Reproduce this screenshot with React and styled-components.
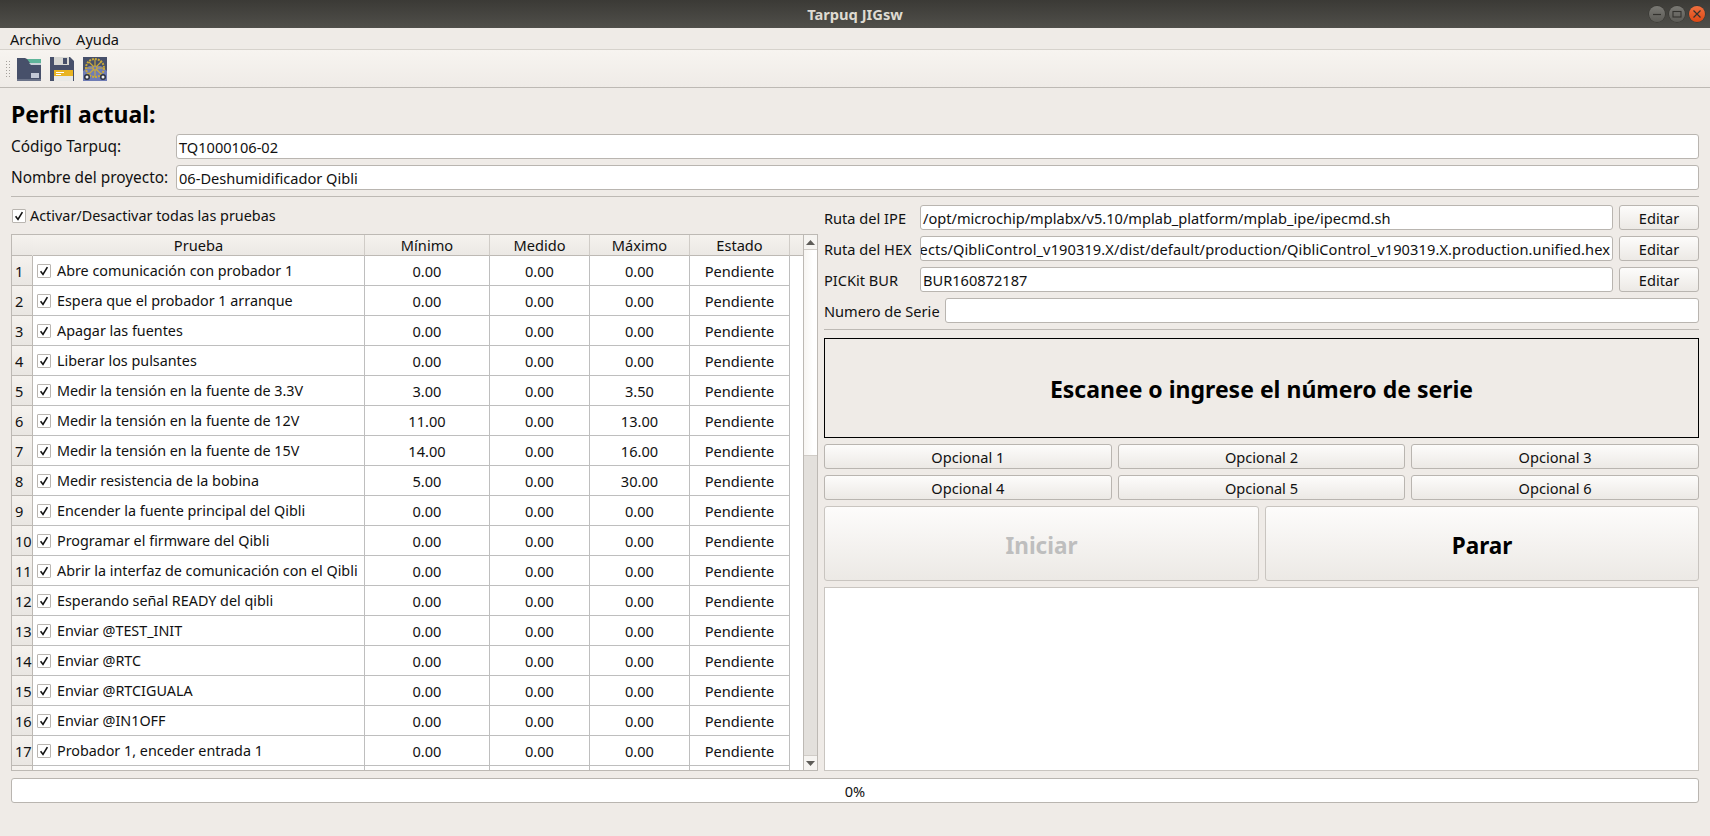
import styled, { createGlobalStyle } from 'styled-components';

const FONT = '"Noto Sans", "Open Sans", sans-serif';

const GlobalStyle = createGlobalStyle`
  html, body {
    margin: 0;
    padding: 0;
    background: #efebe7;
  }
  body {
    font-family: ${FONT};
    font-size: 14.6px;
    color: #111;
  }
`;

const tests = [
  ['Abre comunicación con probador 1', '0.00', '0.00'],
  ['Espera que el probador 1 arranque', '0.00', '0.00'],
  ['Apagar las fuentes', '0.00', '0.00'],
  ['Liberar los pulsantes', '0.00', '0.00'],
  ['Medir la tensión en la fuente de 3.3V', '3.00', '3.50'],
  ['Medir la tensión en la fuente de 12V', '11.00', '13.00'],
  ['Medir la tensión en la fuente de 15V', '14.00', '16.00'],
  ['Medir resistencia de la bobina', '5.00', '30.00'],
  ['Encender la fuente principal del Qibli', '0.00', '0.00'],
  ['Programar el firmware del Qibli', '0.00', '0.00'],
  ['Abrir la interfaz de comunicación con el Qibli', '0.00', '0.00'],
  ['Esperando señal READY del qibli', '0.00', '0.00'],
  ['Enviar @TEST_INIT', '0.00', '0.00'],
  ['Enviar @RTC', '0.00', '0.00'],
  ['Enviar @RTCIGUALA', '0.00', '0.00'],
  ['Enviar @IN1OFF', '0.00', '0.00'],
  ['Probador 1, enceder entrada 1', '0.00', '0.00'],
];

const Window = styled.div`
  width: 1710px;
  height: 836px;
  display: flex;
  flex-direction: column;
  overflow: hidden;
`;

const TitleBar = styled.div`
  height: 28px;
  flex: none;
  position: relative;
  display: flex;
  align-items: center;
  justify-content: center;
  background: linear-gradient(#3b3a36, #504f4a);
  color: #dfdbd2;
  font-weight: 700;
  font-size: 14.7px;
`;

const WindowButtons = styled.div`
  position: absolute;
  right: 5px;
  top: 6px;
  display: flex;
  gap: 4px;
`;

const WindowButton = styled.div`
  width: 16px;
  height: 16px;
  border-radius: 50%;
  display: flex;
  align-items: center;
  justify-content: center;
  background: ${(p) =>
    p.$close
      ? 'linear-gradient(#f0703f, #dd4814)'
      : 'linear-gradient(#7a7974, #5c5b56)'};
  border: 0;
  box-shadow: 0 0 0 0.5px #33322e;
`;

const MenuBar = styled.div`
  height: 22px;
  flex: none;
  box-sizing: border-box;
  display: flex;
  align-items: center;
  gap: 15px;
  padding-left: 10px;
  border-bottom: 1px solid #d6d2cc;
`;

const ToolBar = styled.div`
  height: 38px;
  flex: none;
  box-sizing: border-box;
  display: flex;
  align-items: center;
  gap: 9px;
  padding-left: 5px;
  background: linear-gradient(#f7f4f0, #efebe7);
  border-bottom: 1px solid #bdb9b4;
`;

const Grip = styled.div`
  width: 5px;
  height: 17px;
  margin-right: -2px;
  background-image: radial-gradient(circle, #a5a19c 0.7px, transparent 0.9px);
  background-size: 3px 3px;
`;

const Content = styled.div`
  flex: 1;
  display: flex;
  flex-direction: column;
  padding: 0 11px;
`;

const Heading = styled.h1`
  margin: 0;
  height: 46px;
  display: flex;
  align-items: flex-end;
  padding-bottom: 6px;
  box-sizing: border-box;
  font-size: 23px;
  font-weight: 700;
  line-height: 28px;
  color: #000;
`;

const ProfileRow = styled.div`
  display: grid;
  grid-template-columns: 155px 1fr;
  gap: 10px;
  align-items: center;
  height: 25px;
  margin-bottom: 6px;
`;

const ProfileLabel = styled.span`
  font-size: 15.4px;
  white-space: nowrap;
`;

const Field = styled.div`
  height: 25px;
  box-sizing: border-box;
  background: #fff;
  border: 1px solid #b9b5b0;
  border-radius: 3px;
  padding: 0 2px;
  display: flex;
  align-items: center;
  justify-content: ${(p) => (p.$end ? 'flex-end' : 'flex-start')};
  letter-spacing: ${(p) => (p.$end ? '0.1px' : 'normal')};
  overflow: hidden;
  white-space: nowrap;
  min-width: 0;
`;

const Divider = styled.div`
  height: 1px;
  background: #bdb9b4;
`;

const Columns = styled.div`
  display: grid;
  grid-template-columns: 807px 875px;
  gap: 6px;
  margin-top: 8px;
`;

const LeftColumn = styled.div`
  display: flex;
  flex-direction: column;
`;

const CheckRow = styled.label`
  height: 29px;
  display: flex;
  align-items: center;
  gap: 4px;
  padding: 0 0 8px 1px;
  box-sizing: border-box;
  font-size: 14.4px;
`;

const Box = styled.span`
  width: 14px;
  height: 14px;
  flex: none;
  box-sizing: border-box;
  background: #fff;
  border: 1px solid #b9b5b0;
  border-radius: 1px;
  display: flex;
  align-items: center;
  justify-content: center;
`;

const TableFrame = styled.div`
  height: 537px;
  box-sizing: border-box;
  border: 1px solid #bdb9b4;
  border-right: 0;
  display: flex;
  background: #fff;
`;

const TableBody = styled.div`
  width: 778px;
  flex: none;
  overflow: hidden;
`;

const Row = styled.div`
  display: grid;
  grid-template-columns: 21px 332px 125px 100px 100px 100px;
  height: ${(p) => (p.$header ? '21px' : '30px')};
  box-sizing: border-box;
`;

const HeaderCell = styled.div`
  background: linear-gradient(#f5f2ee, #ebe8e4);
  border-right: 1px solid ${(p) => (p.$corner ? 'transparent' : '#d0ccc7')};
  border-bottom: 1px solid #bdb9b4;
  display: flex;
  align-items: center;
  justify-content: center;
  line-height: 1;
`;

const RowNumber = styled.div`
  background: linear-gradient(#f5f2ee, #e9e6e2);
  border-right: 1px solid #bdb9b4;
  border-bottom: 1px solid #bdb9b4;
  display: flex;
  align-items: flex-end;
  padding: 0 0 4px 3px;
  box-sizing: border-box;
`;

const Cell = styled.div`
  border-right: 1px solid #bebebe;
  border-bottom: 1px solid #bebebe;
  display: flex;
  align-items: center;
  justify-content: center;
  white-space: nowrap;
  overflow: hidden;
`;

const NameCell = styled(Cell)`
  justify-content: flex-start;
  gap: 6px;
  padding-left: 4px;
  font-size: 14.35px;
`;

const HeaderFill = styled.div`
  height: 21px;
  background: linear-gradient(#f5f2ee, #ebe8e4);
  border-bottom: 1px solid #bdb9b4;
  box-sizing: border-box;
`;

const Gutter = styled.div`
  width: 13px;
  flex: none;
  display: flex;
  flex-direction: column;
`;

const ScrollBar = styled.div`
  width: 15px;
  flex: none;
  margin-top: -1px;
  margin-bottom: -1px;
  box-sizing: border-box;
  border: 1px solid #bdb9b4;
  background: #e3e0dc;
  display: flex;
  flex-direction: column;
`;

const ScrollArrow = styled.div`
  height: 14px;
  flex: none;
  background: #f6f4f1;
  display: flex;
  align-items: center;
  justify-content: center;
  ${(p) => (p.$down ? 'margin-top: auto; border-top: 1px solid #d0ccc7;' : 'border-bottom: 1px solid #d0ccc7;')}
`;

const ScrollThumb = styled.div`
  height: 205px;
  flex: none;
  background: linear-gradient(to right, #f7f5f2, #fff 70%);
  border-bottom: 1px solid #d0ccc7;
`;

const RightColumn = styled.div`
  display: flex;
  flex-direction: column;
  gap: 6px;
`;

const PathRow = styled.div`
  display: grid;
  grid-template-columns: 90px 1fr 80px;
  column-gap: 6px;
  align-items: center;
  height: 25px;
`;

const SerialRow = styled.div`
  display: grid;
  grid-template-columns: 115px 1fr;
  column-gap: 6px;
  align-items: center;
  height: 25px;
`;

const Label = styled.span`
  white-space: nowrap;
`;

const Button = styled.button`
  height: ${(p) => (p.$big ? '75px' : '25px')};
  padding: ${(p) => (p.$big ? '3px 0 0' : '0')};
  background: linear-gradient(#fdfcfb, #ece9e5);
  border: 1px solid ${(p) => (p.$big ? '#c9c5c0' : '#b9b5b0')};
  border-radius: 3px;
  font-family: ${FONT};
  font-size: ${(p) => (p.$big ? '22.5px' : '14.6px')};
  font-weight: ${(p) => (p.$big ? 700 : 400)};
  color: ${(p) => (p.disabled ? '#bebebe' : p.$big ? '#000' : '#111')};
`;

const ScanBanner = styled.div`
  height: 100px;
  margin-top: 2px;
  padding-top: 2px;
  box-sizing: border-box;
  border: 1px solid #000;
  display: flex;
  align-items: center;
  justify-content: center;
  font-size: 23px;
  font-weight: 700;
  color: #000;
`;

const OptionGrid = styled.div`
  display: grid;
  grid-template-columns: repeat(3, 1fr);
  gap: 6px;
`;

const ActionGrid = styled.div`
  display: grid;
  grid-template-columns: 435px 1fr;
  gap: 6px;
`;

const LogBox = styled.div`
  height: 184px;
  box-sizing: border-box;
  background: #fff;
  border: 1px solid #c9c5c0;
`;

const ProgressBar = styled.div`
  height: 25px;
  margin-top: 7px;
  box-sizing: border-box;
  background: #fff;
  border: 1px solid #b9b5b0;
  border-radius: 3px;
  display: flex;
  align-items: center;
  justify-content: center;
`;

const Check = () => (
  <svg width="10" height="10" viewBox="0 0 10 10">
    <path d="M1.6 5.2 L4 8.4 L8.4 1.2" fill="none" stroke="#111" strokeWidth="1.6" />
  </svg>
);

const OpenIcon = () => (
  <svg width="24" height="24" viewBox="0 0 24 24">
    <path d="M0 1 H8 L10 2 H24 V24 H0 Z" fill="#47506a" />
    <path d="M10 2 H24 V6 H13 Z" fill="#5fb59a" />
    <path d="M12 6 H24 V8 H14 Z" fill="#c9d2d6" />
    <rect x="14" y="16" width="8" height="5" fill="#c3c9d6" />
    <rect x="0" y="22" width="24" height="2" fill="#6b7389" />
  </svg>
);

const SaveIcon = () => (
  <svg width="24" height="24" viewBox="0 0 24 24">
    <path d="M0 0 H20 L24 4 V24 H0 Z" fill="#47506a" />
    <rect x="4" y="0" width="15" height="8" fill="#d8d8d4" />
    <rect x="13" y="1" width="4" height="6" fill="#47506a" />
    <rect x="4" y="13" width="19" height="11" fill="#e9e9e6" />
    <rect x="4" y="13" width="19" height="6" fill="#e9b422" />
    <rect x="6" y="15" width="8" height="1" fill="#fff" />
    <rect x="6" y="17" width="5" height="1" fill="#fff" />
  </svg>
);

const GearIcon = () => (
  <svg width="24" height="24" viewBox="0 0 24 24">
    <rect width="24" height="24" fill="#47506a" />
    <path d="M0 14 L6 9 L18 9 L24 14 V24 H0 Z" fill="#6f7cb5" />
    <g fill="none" stroke="#c9a93a" strokeWidth="1.2">
      <circle cx="12" cy="11" r="9" strokeDasharray="2 1" strokeWidth="2" />
      <circle cx="12" cy="11" r="2" />
      <path d="M12 2.5 V9 M12 13 V20 M3.5 11 H10 M14 11 H20.5 M6 5 L10.5 9.5 M18 5 L13.5 9.5 M6 17 L10.5 12.5 M18 17 L13.5 12.5" />
    </g>
    <circle cx="4" cy="20" r="3" fill="#2e3342" />
    <circle cx="4" cy="20" r="1.5" fill="#eee" />
    <circle cx="20" cy="20" r="3" fill="#2e3342" />
    <circle cx="20" cy="20" r="1.5" fill="#eee" />
  </svg>
);

const Triangle = ({ down }) => (
  <svg width="9" height="5" viewBox="0 0 9 5">
    <path d={down ? 'M0 0 H9 L4.5 5 Z' : 'M0 5 H9 L4.5 0 Z'} fill="#5e5c58" />
  </svg>
);

const App = () => (
  <Window>
    <GlobalStyle />
    <TitleBar>
      Tarpuq JIGsw
      <WindowButtons>
        <WindowButton>
          <svg width="10" height="10" viewBox="0 0 10 10">
            <path d="M1 5.5 H9" stroke="#33322e" strokeWidth="1.2" />
          </svg>
        </WindowButton>
        <WindowButton>
          <svg width="10" height="10" viewBox="0 0 10 10">
            <rect x="1" y="2.5" width="8" height="5.5" fill="none" stroke="#33322e" strokeWidth="1.1" />
          </svg>
        </WindowButton>
        <WindowButton $close>
          <svg width="10" height="10" viewBox="0 0 10 10">
            <path d="M1.5 1.5 L8.5 8.5 M8.5 1.5 L1.5 8.5" stroke="#33322e" strokeWidth="1.2" />
          </svg>
        </WindowButton>
      </WindowButtons>
    </TitleBar>

    <MenuBar>
      <span>Archivo</span>
      <span>Ayuda</span>
    </MenuBar>

    <ToolBar>
      <Grip />
      <OpenIcon />
      <SaveIcon />
      <GearIcon />
    </ToolBar>

    <Content>
      <Heading>Perfil actual:</Heading>
      <ProfileRow>
        <ProfileLabel>Código Tarpuq:</ProfileLabel>
        <Field>TQ1000106-02</Field>
      </ProfileRow>
      <ProfileRow>
        <ProfileLabel>Nombre del proyecto:</ProfileLabel>
        <Field>06-Deshumidificador Qibli</Field>
      </ProfileRow>
      <Divider />

      <Columns>
        <LeftColumn>
          <CheckRow>
            <Box>
              <Check />
            </Box>
            Activar/Desactivar todas las pruebas
          </CheckRow>
          <TableFrame>
            <TableBody>
              <Row $header>
                <HeaderCell $corner />
                <HeaderCell>Prueba</HeaderCell>
                <HeaderCell>Mínimo</HeaderCell>
                <HeaderCell>Medido</HeaderCell>
                <HeaderCell>Máximo</HeaderCell>
                <HeaderCell>Estado</HeaderCell>
              </Row>
              {tests.map(([name, min, max], i) => (
                <Row key={name}>
                  <RowNumber>{i + 1}</RowNumber>
                  <NameCell>
                    <Box>
                      <Check />
                    </Box>
                    {name}
                  </NameCell>
                  <Cell>{min}</Cell>
                  <Cell>0.00</Cell>
                  <Cell>{max}</Cell>
                  <Cell>Pendiente</Cell>
                </Row>
              ))}
              <Row>
                <RowNumber />
                <Cell />
                <Cell />
                <Cell />
                <Cell />
                <Cell />
              </Row>
            </TableBody>
            <Gutter>
              <HeaderFill />
            </Gutter>
            <ScrollBar>
              <ScrollArrow>
                <Triangle />
              </ScrollArrow>
              <ScrollThumb />
              <ScrollArrow $down>
                <Triangle down />
              </ScrollArrow>
            </ScrollBar>
          </TableFrame>
        </LeftColumn>

        <RightColumn>
          <PathRow>
            <Label>Ruta del IPE</Label>
            <Field>/opt/microchip/mplabx/v5.10/mplab_platform/mplab_ipe/ipecmd.sh</Field>
            <Button>Editar</Button>
          </PathRow>
          <PathRow>
            <Label>Ruta del HEX</Label>
            <Field $end>ects/QibliControl_v190319.X/dist/default/production/QibliControl_v190319.X.production.unified.hex</Field>
            <Button>Editar</Button>
          </PathRow>
          <PathRow>
            <Label>PICKit BUR</Label>
            <Field>BUR160872187</Field>
            <Button>Editar</Button>
          </PathRow>
          <SerialRow>
            <Label>Numero de Serie</Label>
            <Field />
          </SerialRow>
          <Divider />
          <ScanBanner>Escanee o ingrese el número de serie</ScanBanner>
          <OptionGrid>
            {[1, 2, 3, 4, 5, 6].map((n) => (
              <Button key={n}>Opcional {n}</Button>
            ))}
          </OptionGrid>
          <ActionGrid>
            <Button $big disabled>
              Iniciar
            </Button>
            <Button $big>Parar</Button>
          </ActionGrid>
          <LogBox />
        </RightColumn>
      </Columns>

      <ProgressBar>0%</ProgressBar>
    </Content>
  </Window>
);

export default App;
